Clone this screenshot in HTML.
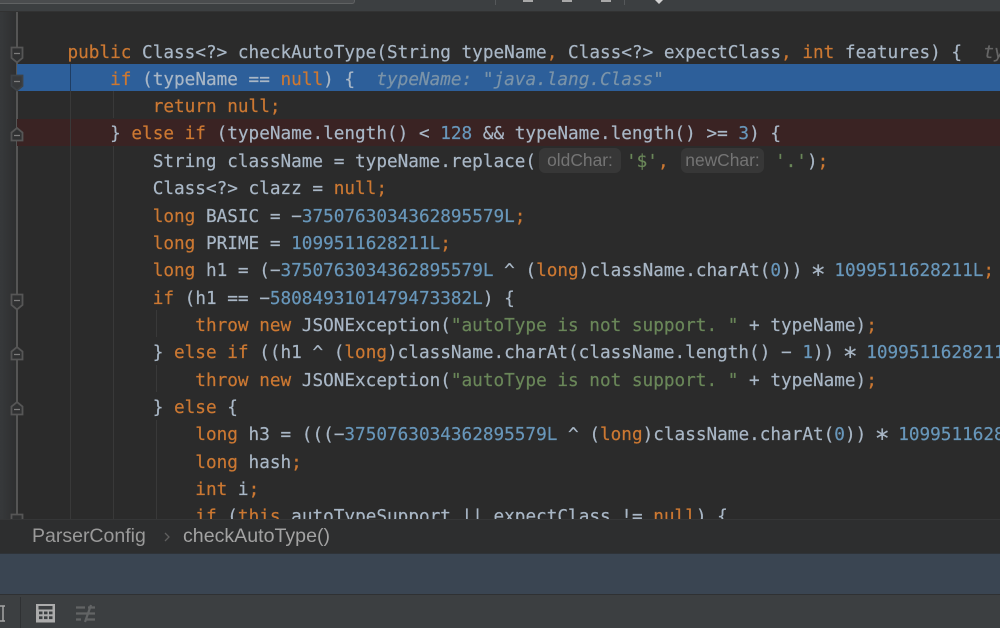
<!DOCTYPE html>
<html>
<head>
<meta charset="utf-8">
<style>
html,body{margin:0;padding:0;background:#2b2b2b;}
#root{position:relative;width:1000px;height:628px;overflow:hidden;background:#2b2b2b;font-family:"DejaVu Sans Mono","Liberation Mono",monospace;font-size:17.7px;color:#a9b7c6;}
.abs{position:absolute;}
#code{position:absolute;left:0;top:1.7px;width:1000px;height:517.3px;overflow:hidden;}
.l{position:absolute;left:67.5px;height:27px;line-height:27px;white-space:pre;-webkit-text-stroke:0.2px currentColor;filter:blur(0.3px);}
.k{color:#cc7832;}
.n{color:#6897bb;}
.s{color:#6a8759;}
.h{color:#7a93a8;font-style:italic;}
.g{color:#666;font-style:italic;}
.a{display:inline-block;width:1ch;text-align:center;transform:scale(1.4);}
.hint{position:absolute;top:148px;height:25px;line-height:25px;background:#373737;border-radius:6px;color:#747474;font-family:"Liberation Sans",sans-serif;font-size:17.4px;text-align:center;filter:blur(0.3px);}
.ig{position:absolute;width:1px;background:#393939;}
</style>
</head>
<body>
<div id="root">
<!-- top bar -->
<div class="abs" style="left:0;top:0;width:1000px;height:11px;background:#3c3f41;"></div>
<div class="abs" style="left:0;top:0;width:354px;height:3px;background:#4a4c4e;border-bottom:1px solid #606263;border-right:1px solid #606263;border-radius:0 0 3px 0;"></div>
<div class="abs" style="left:0;top:11px;width:1000px;height:1px;background:#323232;"></div>
<div class="abs" style="left:495px;top:0;width:1px;height:5px;background:#55585a;"></div>
<div class="abs" style="left:624px;top:0;width:1px;height:5px;background:#55585a;"></div>
<div class="abs" style="left:523px;top:0;width:10px;height:2px;background:#a8a8a8;"></div>
<div class="abs" style="left:562px;top:0;width:10px;height:2px;background:#a8a8a8;"></div>
<div class="abs" style="left:601px;top:0;width:10px;height:2px;background:#a8a8a8;"></div>
<div class="abs" style="left:655px;top:0;width:0;height:0;border-left:4px solid transparent;border-right:4px solid transparent;border-top:4px solid #d0d0d0;"></div>

<!-- gutter -->
<div class="abs" style="left:0;top:12px;width:16px;height:507px;background:linear-gradient(90deg,#37393b,#2e2f30);"></div>
<div class="abs" style="left:16px;top:12px;width:1.500px;height:507px;background:#555;"></div>

<!-- highlighted bands -->
<div class="abs" style="left:17px;top:64px;width:983px;height:27px;background:#2d5f9a;"></div>
<div class="abs" style="left:17px;top:119px;width:983px;height:27px;background:#3a2323;"></div>

<!-- indent guides -->
<div class="ig" style="left:70px;top:64px;height:27px;background:#1f3d63;"></div>
<div class="ig" style="left:70px;top:91px;height:428px;"></div>
<div class="ig" style="left:113px;top:91px;height:27px;"></div>
<div class="ig" style="left:113px;top:146px;height:373px;"></div>
<div class="ig" style="left:156px;top:310px;height:27px;"></div>
<div class="ig" style="left:156px;top:365px;height:27px;"></div>
<div class="ig" style="left:156px;top:420px;height:99px;"></div>

<!-- fold markers -->
<svg class="abs" style="left:0;top:0;" width="40" height="530" viewBox="0 0 40 530">
<g fill="#303132" stroke="#565656" stroke-width="1.800">
<path d="M11.500 47.500h11v10.500l-5.500 4.500-5.500-4.500z"/>
<path d="M11.500 75.500h11v10.500l-5.500 4.500-5.500-4.500z" fill="#37393b" stroke="#3e4246"/>
<path d="M11.500 140.500h11v-8l-5.500-4.500-5.500 4.500z"/>
<path d="M11.500 294.500h11v10.500l-5.500 4.500-5.500-4.500z"/>
<path d="M11.500 359.500h11v-8l-5.500-4.500-5.500 4.500z"/>
<path d="M11.500 414.500h11v-8l-5.500-4.500-5.500 4.500z"/>
<path d="M11.500 514.500h11v6h-11z"/>
</g>
<g stroke="#7d7d7d" stroke-width="1.300">
<path d="M14 53.500h6M14 81.500h6M14 135.500h6M14 300.500h6M14 354.500h6M14 409.500h6"/>
</g>
</svg>

<!-- hints -->
<div class="hint" style="left:539px;width:82px;">oldChar:</div>
<div class="hint" style="left:681px;width:83px;">newChar:</div>

<!-- code -->
<div id="code">
<div class="l" style="top:38px"><span class="k">public</span> Class&lt;?&gt; checkAutoType(String typeName<span class="k">,</span> Class&lt;?&gt; expectClass<span class="k">,</span> <span class="k">int</span> features) {  <span class="g">typeName</span></div>
<div class="l" style="top:65px">    <span class="k">if</span> (typeName == <span class="k">null</span>) {  <span class="h">typeName: "java.lang.Class"</span></div>
<div class="l" style="top:92.500px">        <span class="k">return null;</span></div>
<div class="l" style="top:119.800px">    } <span class="k">else if</span> (typeName.length() &lt; <span class="n">128</span> &amp;&amp; typeName.length() &gt;= <span class="n">3</span>) {</div>
<div class="l" style="top:147.200px">        String className = typeName.replace(</div>
<div class="l" style="top:147.200px;left:626px"><span class="s">'$'</span><span class="k">,</span></div>
<div class="l" style="top:147.200px;left:775px"><span class="s">'.'</span>)<span class="k">;</span></div>
<div class="l" style="top:174.500px">        Class&lt;?&gt; clazz = <span class="k">null;</span></div>
<div class="l" style="top:201.900px">        <span class="k">long</span> BASIC = −<span class="n">3750763034362895579L</span><span class="k">;</span></div>
<div class="l" style="top:229.200px">        <span class="k">long</span> PRIME = <span class="n">1099511628211L</span><span class="k">;</span></div>
<div class="l" style="top:256.600px">        <span class="k">long</span> h1 = (−<span class="n">3750763034362895579L</span> ^ (<span class="k">long</span>)className.charAt(<span class="n">0</span>)) <span class="a">∗</span> <span class="n">1099511628211L</span><span class="k">;</span></div>
<div class="l" style="top:284px">        <span class="k">if</span> (h1 == −<span class="n">5808493101479473382L</span>) {</div>
<div class="l" style="top:311.300px">            <span class="k">throw new</span> JSONException(<span class="s">"autoType is not support. "</span> + typeName)<span class="k">;</span></div>
<div class="l" style="top:338.700px">        } <span class="k">else if</span> ((h1 ^ (<span class="k">long</span>)className.charAt(className.length() − <span class="n">1</span>)) <span class="a">∗</span> <span class="n">1099511628211L</span></div>
<div class="l" style="top:366px">            <span class="k">throw new</span> JSONException(<span class="s">"autoType is not support. "</span> + typeName)<span class="k">;</span></div>
<div class="l" style="top:393.400px">        } <span class="k">else</span> {</div>
<div class="l" style="top:420.700px">            <span class="k">long</span> h3 = (((−<span class="n">3750763034362895579L</span> ^ (<span class="k">long</span>)className.charAt(<span class="n">0</span>)) <span class="a">∗</span> <span class="n">1099511628211L</span></div>
<div class="l" style="top:448.100px">            <span class="k">long</span> hash<span class="k">;</span></div>
<div class="l" style="top:475.400px">            <span class="k">int</span> i<span class="k">;</span></div>
<div class="l" style="top:502.800px">            <span class="k">if</span> (<span class="k">this</span>.autoTypeSupport || expectClass != <span class="k">null</span>) {</div>
</div>

<!-- breadcrumb bar -->
<div class="abs" style="left:0;top:519px;width:1000px;height:34px;background:#2d2e2f;border-top:1px solid #353637;box-sizing:border-box;"></div>
<div class="abs" style="left:32px;top:524px;height:25px;line-height:25px;font-family:'Liberation Sans',sans-serif;font-size:19.500px;color:#9a9a9a;white-space:pre;filter:blur(0.3px);">ParserConfig</div>
<div class="abs" style="left:183px;top:524px;height:25px;line-height:25px;font-family:'Liberation Sans',sans-serif;font-size:19.600px;color:#a3a3a3;white-space:pre;filter:blur(0.3px);">checkAutoType()</div>
<svg class="abs" style="left:162px;top:530px;" width="10" height="14" viewBox="0 0 10 14"><path d="M3 3l4 4-4 4" fill="none" stroke="#5f5f5f" stroke-width="1.300"/></svg>

<!-- blue strip -->
<div class="abs" style="left:0;top:553px;width:1000px;height:41px;background:#3a4552;"></div>
<div class="abs" style="left:0;top:553px;width:1000px;height:1px;background:#2f3338;"></div>

<!-- bottom toolbar -->
<div class="abs" style="left:0;top:594px;width:1000px;height:34px;background:#3c3f41;border-top:1px solid #2f3133;box-sizing:border-box;"></div>
<div class="abs" style="left:20px;top:597px;width:1px;height:31px;background:#2f3133;"></div>
<svg class="abs" style="left:0;top:600px;" width="110" height="28" viewBox="0 0 110 28">
<path d="M0 6h5M0 21h5M3 6v15" fill="none" stroke="#a5a5a5" stroke-width="1.500"/>
<path d="M36 4h19v18.500h-19z" fill="#acacac"/>
<path d="M38.500 6h14v3.500h-14z" fill="#3c3f41"/>
<g fill="#3c3f41">
<rect x="39" y="11.500" width="3.500" height="2.800"/><rect x="44" y="11.500" width="3.500" height="2.800"/><rect x="49" y="11.500" width="3.500" height="2.800"/>
<rect x="39" y="16.300" width="3.500" height="2.800"/><rect x="44" y="16.300" width="3.500" height="2.800"/><rect x="49" y="16.300" width="3.500" height="2.800"/>
</g>
<path d="M76 7.500h9M88 7.500h7M76 13.500h19M76 19.500h5M85 19.500h10M91 5l-6 17" fill="none" stroke="#626465" stroke-width="2.200"/>
</svg>
</div>
</body>
</html>
